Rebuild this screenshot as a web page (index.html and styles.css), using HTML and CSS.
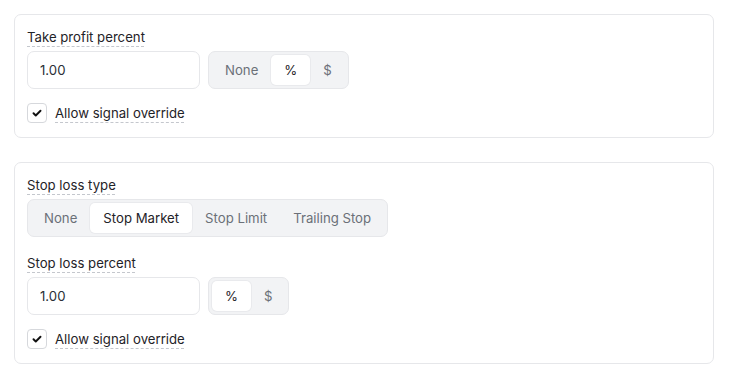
FILE: index.html
```html
<!DOCTYPE html>
<html lang="en">
<head>
    <meta charset="UTF-8">
    <meta name="viewport" content="width=device-width, initial-scale=1.0">
    <title>Order settings</title>
    <link rel="stylesheet" href="styles.css">
</head>
<body>
    <div class="page">
        <div class="card">
            <div class="field">
                <span class="label">Take profit percent</span>
                <div class="row">
                    <input type="text" class="text-input" value="1.00">
                    <div class="segmented">
                        <button class="seg-btn">None</button>
                        <button class="seg-btn active">%</button>
                        <button class="seg-btn">$</button>
                    </div>
                </div>
            </div>
            <label class="check">
                <span class="box">
                    <svg viewBox="0 0 16 16"><path d="M4 8.3l2.6 2.6L12 5.4"/></svg>
                </span>
                <span class="label">Allow signal override</span>
            </label>
        </div>

        <div class="card">
            <div class="field">
                <span class="label">Stop loss type</span>
                <div class="row">
                    <div class="segmented">
                        <button class="seg-btn">None</button>
                        <button class="seg-btn active">Stop Market</button>
                        <button class="seg-btn">Stop Limit</button>
                        <button class="seg-btn">Trailing Stop</button>
                    </div>
                </div>
            </div>
            <div class="field">
                <span class="label">Stop loss percent</span>
                <div class="row">
                    <input type="text" class="text-input" value="1.00">
                    <div class="segmented">
                        <button class="seg-btn active">%</button>
                        <button class="seg-btn">$</button>
                    </div>
                </div>
            </div>
            <label class="check">
                <span class="box">
                    <svg viewBox="0 0 16 16"><path d="M4 8.3l2.6 2.6L12 5.4"/></svg>
                </span>
                <span class="label">Allow signal override</span>
            </label>
        </div>
    </div>
</body>
</html>
```

FILE: styles.css
```css
* {
    margin: 0;
    padding: 0;
    box-sizing: border-box;
}

body {
    font-family: Inter, 'Noto Sans', sans-serif;
    font-size: 13.2px;
    color: #1f2328;
    background: #fff;
}

.page {
    padding: 14px;
    width: 728px;
    display: flex;
    flex-direction: column;
    gap: 24px;
}

.card {
    border: 1px solid #e6e7ea;
    border-radius: 7px;
    padding: 12px 12px 14px;
    display: flex;
    flex-direction: column;
    gap: 16px;
}

.field {
    display: flex;
    flex-direction: column;
    gap: 4px;
    align-items: flex-start;
}

.label {
    line-height: 20px;
    color: #1f2328;
    text-decoration: underline dashed #c4c7cd;
    text-decoration-thickness: 1px;
    text-underline-offset: 4px;
}

.row {
    display: flex;
    gap: 8px;
}

.text-input {
    width: 173px;
    height: 38px;
    border: 1px solid #e6e7ea;
    border-radius: 7px;
    padding: 0 12px;
    font: inherit;
    color: #2b2f36;
    outline: none;
}

.segmented {
    display: flex;
    height: 38px;
    padding: 3px;
    background: #f2f3f5;
    border: 1px solid #e6e7ea;
    border-radius: 7px;
}

.seg-btn {
    border: none;
    background: none;
    font: inherit;
    color: #6b7078;
    padding: 0 13px;
    border-radius: 5px;
    cursor: pointer;
}

.seg-btn.active {
    background: #fff;
    color: #1f2328;
    box-shadow: 0 0 0 1px #e9eaed;
}

.check {
    display: flex;
    align-items: center;
    gap: 8px;
    height: 20px;
    margin-top: -2px;
}

.box {
    width: 20px;
    height: 20px;
    border: 1px solid #d6d8dc;
    border-radius: 4px;
    display: flex;
    align-items: center;
    justify-content: center;
}

.box svg {
    width: 14px;
    height: 14px;
    fill: none;
    stroke: #111;
    stroke-width: 2.2;
    stroke-linecap: round;
    stroke-linejoin: round;
}
```
